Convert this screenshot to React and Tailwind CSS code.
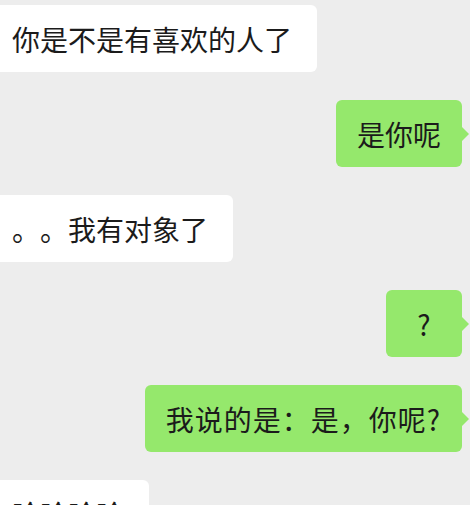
const FONT = "font-['Noto_Sans_CJK_SC',_'Noto_Sans',_sans-serif]"

const messages = [
  { from: 'them', text: '你是不是有喜欢的人了' },
  { from: 'me', text: '是你呢' },
  { from: 'them', text: '。。我有对象了' },
  { from: 'me', text: '?', narrow: true },
  { from: 'me', text: '我说的是：是，你呢?', wide: true },
  { from: 'them', text: '哈哈哈哈' },
]

function Bubble({ from, text, narrow, wide }) {
  if (from === 'them') {
    return (
      <div className="flex justify-start">
        <div className="h-[67px] flex items-center bg-white rounded-r-md pl-[12px] pr-[25px] text-[28px] text-[#1b1b1b] leading-none whitespace-nowrap [text-spacing-trim:space-all]">
          {text}
        </div>
      </div>
    )
  }
  return (
    <div className="flex justify-end pr-[8px]">
      <div
        className={
          'relative h-[67px] flex items-center justify-center bg-[#95e86c] rounded-md text-[28px] text-[#1b1b1b] leading-none whitespace-nowrap [text-spacing-trim:space-all] ' +
          (narrow ? 'w-[76px]' : 'px-[21px]') +
          (wide ? ' tracking-[1px]' : '')
        }
      >
        {text}
        {/* tail */}
        <span className="absolute right-[-7px] top-1/2 -translate-y-1/2 w-0 h-0 border-y-[7px] border-y-transparent border-l-[7px] border-l-[#95e86c]" />
      </div>
    </div>
  )
}

export default function App() {
  return (
    <div className={`w-[470px] h-[505px] overflow-hidden bg-[#ededed] pt-[5px] ${FONT}`}>
      <div className="flex flex-col gap-[28px]">
        {messages.map((m, i) => (
          <Bubble key={i} {...m} />
        ))}
      </div>
    </div>
  )
}
